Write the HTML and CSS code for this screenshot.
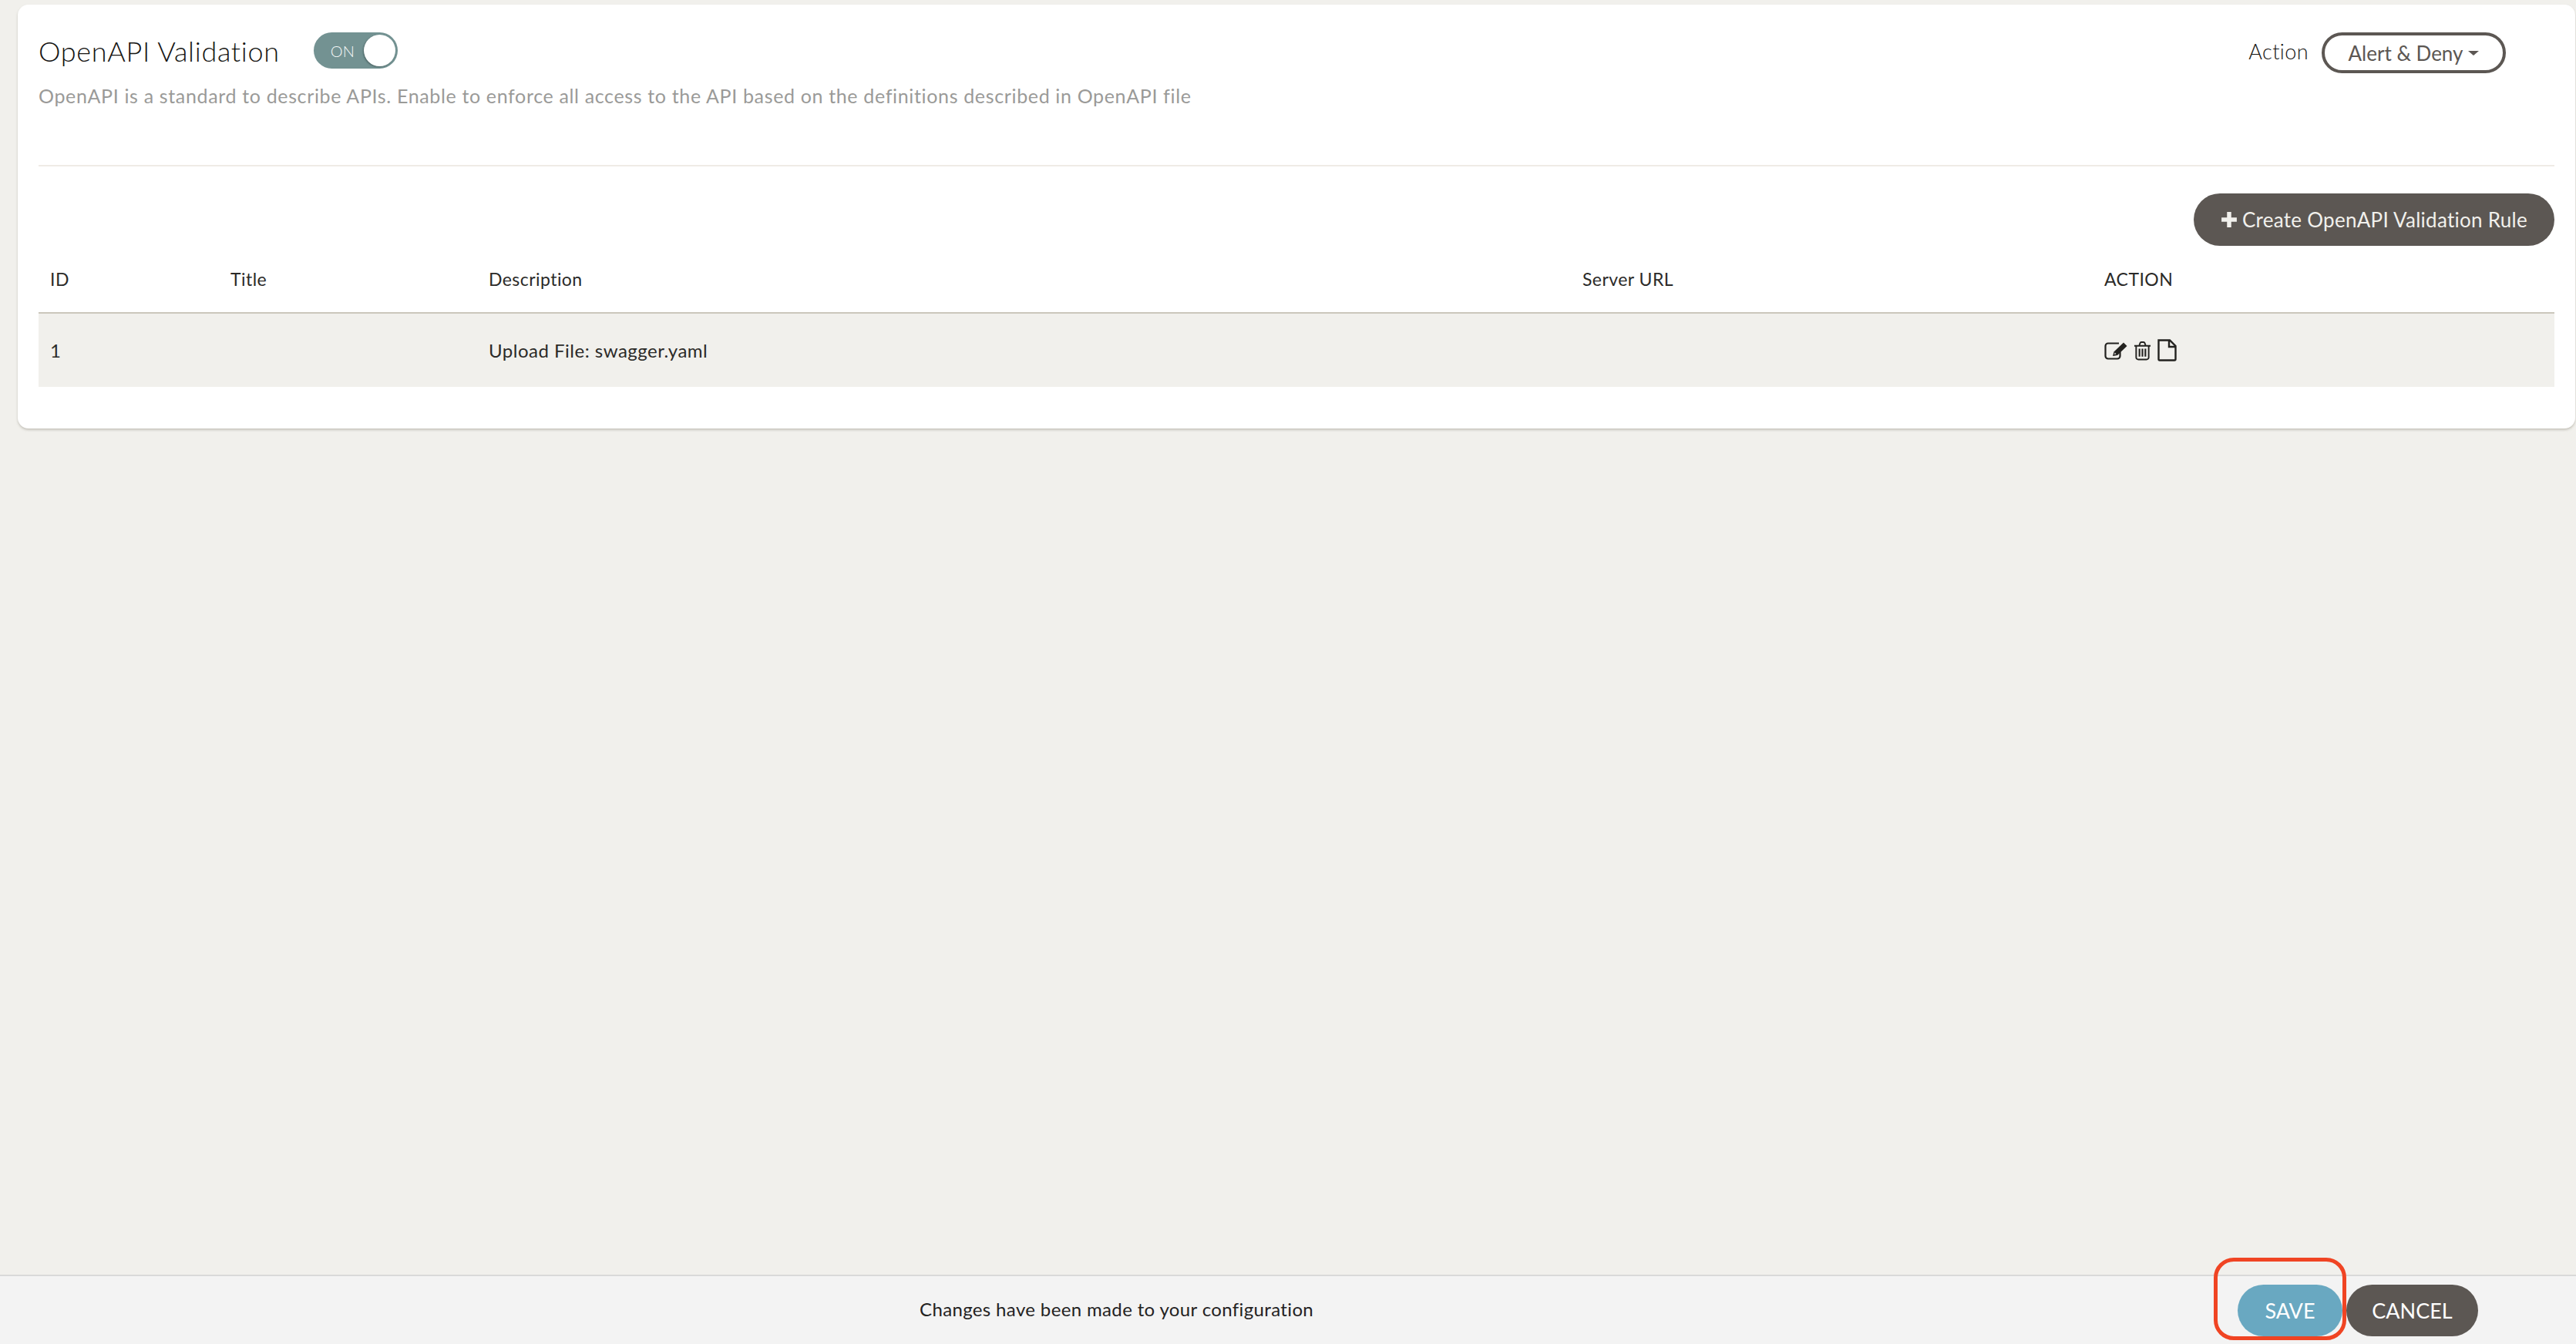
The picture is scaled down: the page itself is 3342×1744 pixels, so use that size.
FILE: index.html
```html
<!DOCTYPE html>
<html lang="en">
<head>
<meta charset="utf-8">
<title>OpenAPI Validation</title>
<link rel="stylesheet" href="styles.css">
</head>
<body>
<main class="main">
  <section class="card">
    <div class="head">
      <div class="head-left">
        <div class="title-row">
          <h1 class="title">OpenAPI Validation</h1>
          <div class="toggle"><span class="toggle-label">ON</span><span class="toggle-thumb"></span></div>
        </div>
        <p class="subtitle">OpenAPI is a standard to describe APIs. Enable to enforce all access to the API based on the definitions described in OpenAPI file</p>
      </div>
      <div class="head-right">
        <span class="action-label">Action</span>
        <button class="dropdown">Alert &amp; Deny<span class="caret"></span></button>
      </div>
    </div>
    <div class="toolbar">
      <button class="create"><svg class="plus" viewBox="0 0 20 20"><path d="M7.500 1h5v6.500H19v5h-6.500V19h-5v-6.500H1v-5h6.500z" fill="#f1f0ec"/></svg>Create OpenAPI Validation Rule</button>
    </div>
    <table class="rules">
      <colgroup><col class="c-id"><col class="c-title"><col class="c-desc"><col class="c-url"><col class="c-act"></colgroup>
      <thead>
        <tr><th>ID</th><th>Title</th><th>Description</th><th>Server URL</th><th>ACTION</th></tr>
      </thead>
      <tbody>
        <tr>
          <td>1</td><td></td><td>Upload File: swagger.yaml</td><td></td>
          <td>
            <div class="icons">
              <svg class="ic-edit" viewBox="0 0 30 24" fill="none" stroke="#23221f" stroke-width="2.200"><path d="M20.500 13.500v5.500a3.500 3.500 0 0 1-3.500 3.500H5a3.500 3.500 0 0 1-3.500-3.500V6A3.500 3.500 0 0 1 5 2.500h14"/><path d="M11 19l1.500-5.500L25 1.500 29.500 6 17 18z" fill="#23221f" stroke="none"/><path d="M13 17l.7-2.500 1.800 1.800z" fill="#f1f0ec" stroke="none"/></svg>
              <svg class="ic-trash" viewBox="0 0 24 26" fill="none" stroke="#23221f" stroke-width="2"><path d="M1 6.500h22M3.500 6.500V22a3 3 0 0 0 3 3h11a3 3 0 0 0 3-3V6.500M7.500 6.500l1.500-4a1.500 1.500 0 0 1 1.500-1h3a1.500 1.500 0 0 1 1.500 1l1.500 4"/><path d="M8 10.500v10.500M12 10.500v10.500M16 10.500v10.500" stroke-width="2.200"/></svg>
              <svg class="ic-file" viewBox="0 0 25 29" fill="none" stroke="#23221f" stroke-width="2.400"><path d="M1.500 1.500h14.500l7.500 7.500v17a1.500 1.500 0 0 1-1.500 1.500H3a1.500 1.500 0 0 1-1.500-1.500zM15 1.500v8.500h8.500"/></svg>
            </div>
          </td>
        </tr>
      </tbody>
    </table>
  </section>
</main>
<footer class="footer">
  <span class="notice">Changes have been made to your configuration</span>
  <div class="footer-actions">
    <button class="btn btn-save">SAVE</button>
    <button class="btn btn-cancel">CANCEL</button>
  </div>
  <div class="highlight"></div>
</footer>
</body>
</html>
```
FILE: styles.css
```css
* { box-sizing: border-box; }
html, body { margin: 0; height: 100%; }
body {
  display: flex;
  flex-direction: column;
  height: 1744px;
  overflow: hidden;
  background: #f1f0ec;
  font-family: "Lato", "Open Sans", sans-serif;
  color: #2b2a28;
}
button { font-family: inherit; cursor: pointer; }
.main { flex: 1; padding: 6px 1px 0 23px; }
.card {
  height: 550px;
  padding: 36px 27px 0 27px;
  background: #fff;
  border-radius: 14px;
  box-shadow: 0 2px 3px rgba(120, 115, 100, .35);
}
.head {
  display: flex;
  justify-content: space-between;
  height: 174px;
  padding-right: 63px;
  border-bottom: 2px solid #efebe6;
}
.title-row { display: flex; align-items: center; gap: 44px; height: 47px; }
.title { margin: 0; font-size: 36px; font-weight: 300; letter-spacing: .68px; color: #151412; }
.toggle {
  display: flex;
  align-items: center;
  justify-content: space-between;
  width: 109px;
  height: 47px;
  padding: 0 3px 0 22px;
  border-radius: 24px;
  background: #739292;
}
.toggle-label { font-size: 20px; font-weight: 300; color: #f4f7f7; }
.toggle-thumb {
  width: 41px;
  height: 41px;
  border-radius: 50%;
  background: #fff;
  box-shadow: -1px 1px 2px rgba(40, 60, 60, .5);
}
.subtitle { margin: 20px 0 0; font-size: 25px; font-weight: 400; letter-spacing: .65px; color: #9a9a98; }
.head-right { display: flex; align-items: flex-start; gap: 17px; }
.action-label { font-size: 27px; font-weight: 300; line-height: 50px; letter-spacing: .4px; color: #151412; }
.dropdown {
  display: flex;
  align-items: center;
  justify-content: center;
  width: 239px;
  height: 53px;
  padding: 0;
  font-size: 26px;
  color: #5c5753;
  background: #fff;
  border: 4px solid #5c5753;
  border-radius: 27px;
}
.caret {
  width: 0;
  height: 0;
  margin-left: 7px;
  border-left: 7px solid transparent;
  border-right: 7px solid transparent;
  border-top: 6px solid #5c5753;
}
.toolbar { display: flex; justify-content: flex-end; padding-top: 35px; }
.create {
  display: flex;
  align-items: center;
  justify-content: center;
  gap: 6px;
  width: 468px;
  height: 68px;
  padding: 0;
  font-size: 26px;
  letter-spacing: .27px;
  color: #f1f0ec;
  background: #5c5753;
  border: 0;
  border-radius: 34px;
}
.plus { width: 22px; height: 22px; }
.rules {
  width: 100%;
  table-layout: fixed;
  border-collapse: collapse;
  font-size: 23px;
  color: #2b2a28;
}
.c-id { width: 234px; }
.c-title { width: 335px; }
.c-desc { width: 1419px; }
.c-url { width: 677px; }
.rules th {
  height: 87px;
  padding: 0 15px;
  text-align: left;
  font-weight: 400;
  letter-spacing: .45px;
  border-bottom: 2px solid #cbc7bc;
}
.rules td { height: 96px; padding: 0 15px; font-size: 24px; letter-spacing: .5px; background: #f1f0ec; }
.icons { display: flex; align-items: center; gap: 8px; }
.ic-edit { width: 30px; height: 24px; }
.ic-trash { width: 23px; height: 26px; }
.ic-file { width: 25px; height: 29px; }
.footer {
  position: relative;
  display: flex;
  align-items: center;
  height: 90px;
  padding: 0 127px 0 1193px;
  background: #f3f3f3;
  border-top: 2px solid #d9d9d9;
}
.notice { flex: 1; margin-bottom: 3px; font-size: 24px; color: #23221f; letter-spacing: .36px; }
.footer-actions { display: flex; gap: 5px; }
.btn {
  height: 67px;
  padding: 0;
  font-size: 27px;
  color: #fff;
  border: 0;
  border-radius: 34px;
}
.btn-save { width: 136px; background: #69a8c1; }
.btn-cancel { width: 171px; background: #5c5753; }
.highlight {
  position: absolute;
  left: 2872px;
  top: -24px;
  width: 172px;
  height: 107px;
  border: 5px solid #f04423;
  border-radius: 26px;
}
```
